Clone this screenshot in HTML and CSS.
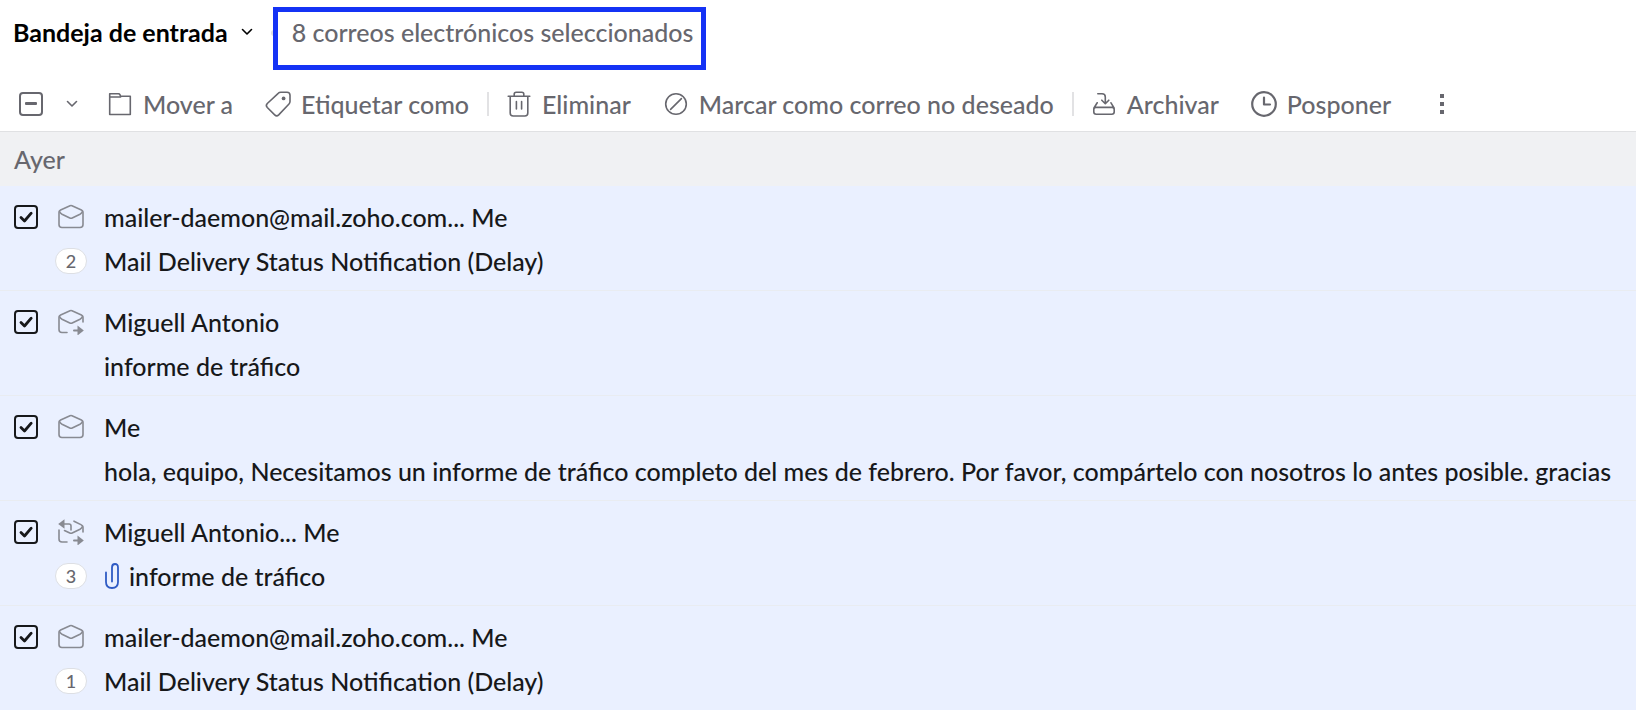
FILE: index.html
```html
<!DOCTYPE html>
<html lang="es">
<head>
    <meta charset="UTF-8">
    <meta name="viewport" content="width=device-width, initial-scale=1.0">
    <title>Bandeja de entrada</title>
    <link rel="stylesheet" href="styles.css">
</head>
<body>
    <svg class="sprite" aria-hidden="true">
        <symbol id="mail-open" viewBox="0 0 26 26">
            <path d="M1 8.2Q1 6.6 2.6 5.9L12 1.7Q13 1.3 14 1.7L23.4 5.9Q25 6.6 25 8.2V20.5Q25 23.5 22 23.5H4Q1 23.5 1 20.5Z"/>
            <path d="M1.5 7.5Q2.2 9.2 4 10.2L11.8 14Q13 14.6 14.2 14L22 10.2Q23.8 9.2 24.5 7.5"/>
        </symbol>
        <symbol id="mail-forward" viewBox="0 0 26 26">
            <path d="M9 23.5H4Q1 23.5 1 20.5V8.2Q1 6.6 2.6 5.9L12 1.7Q13 1.3 14 1.7L23.4 5.9Q25 6.6 25 8.2V13"/>
            <path d="M1.5 7.5Q2.2 9.2 4 10.2L11.8 14Q13 14.6 14.2 14L22 10.2Q23.8 9.2 24.5 7.5"/>
            <path d="M16 21.5H20" stroke-width="2"/>
            <path class="solid" d="M19.5 16.5L25.8 21.5L19.5 26.5Z"/>
        </symbol>
        <symbol id="mail-replied" viewBox="0 0 26 26">
            <path d="M16 2.2L23.4 5.9Q25 6.6 25 8.2V13M9 23H4Q1 23 1 20V11"/>
            <path d="M5 5H11Q13 5 13 7V11"/>
            <path d="M6.5 11.5L11.8 14Q13 14.6 14.2 14L22 10.2Q23.8 9.2 24.5 7.5"/>
            <path class="solid" d="M6.5 0.2L0.2 5L6.5 9.8Z"/>
            <path d="M16 21.5H20" stroke-width="2"/>
            <path class="solid" d="M19.5 16.5L25.8 21.5L19.5 26.5Z"/>
        </symbol>
    </svg>

    <header class="header">
        <button class="folder" type="button">
            Bandeja de entrada
            <svg class="chevron" viewBox="0 0 12 8"><path d="M1.5 1.5L6 6L10.5 1.5"/></svg>
        </button>
        <span class="dot"></span>
        <span class="selected">8 correos electrónicos seleccionados</span>
    </header>

    <div class="toolbar">
        <input class="check check-some" type="checkbox" aria-label="Seleccionar todo">
        <button class="select-menu" type="button" aria-label="Opciones de selección">
            <svg class="chevron" viewBox="0 0 12 8"><path d="M1.5 1.5L6 6L10.5 1.5"/></svg>
        </button>
        <button class="tool" type="button">
            <svg class="icon" viewBox="0 0 26 26"><path d="M2.7 23.5V2.7H11.5Q12.5 2.7 12.9 3.6L13.6 5.2H23.3V23.5ZM2.7 6H13.6"/></svg>
            Mover a
        </button>
        <button class="tool" type="button">
            <svg class="icon" viewBox="0 0 26 26">
                <path d="M13.2 2.3Q14.2 1.2 15.8 1.2H22Q25 1.2 25 4.2V10.6Q25 12 24 13L13.7 23.9Q11.7 25.9 9.7 23.9L2.3 16.5Q0.4 14.5 2.3 12.5Z"/>
                <circle class="solid" cx="18.6" cy="7.4" r="1.9"/>
            </svg>
            Etiquetar como
        </button>
        <span class="separator"></span>
        <button class="tool" type="button">
            <svg class="icon" viewBox="0 0 26 26"><path d="M2.2 5.2H23.8M8.2 5V3.2Q8.2 1.2 10.2 1.2H15.8Q17.8 1.2 17.8 3.2V5M4.2 5.2V22Q4.2 25 7.2 25H18.8Q21.8 25 21.8 22V5.2M10.4 10.5V18M15.6 10.5V18"/></svg>
            Eliminar
        </button>
        <button class="tool" type="button">
            <svg class="icon" viewBox="0 0 26 26"><circle cx="13" cy="13" r="10.3"/><path d="M7.6 18.4L18.4 7.6"/></svg>
            Marcar como correo no deseado
        </button>
        <span class="separator"></span>
        <button class="tool" type="button">
            <svg class="icon" viewBox="0 0 26 26"><path d="M6.8 2.8H11Q14.3 2.8 14.3 6V12M10.8 9.2L14.3 12.7L17.8 9.2M6.2 11.8L2.8 17.2M20 11.8L23.2 17.2M5.2 16.4H20.8Q23.2 16.4 23.2 18.6V21Q23.2 23.2 20.8 23.2H5.2Q2.8 23.2 2.8 21V18.6Q2.8 16.4 5.2 16.4"/></svg>
            Archivar
        </button>
        <button class="tool" type="button">
            <svg class="icon icon-bold" viewBox="0 0 26 26"><circle cx="13" cy="13" r="11.8"/><path d="M13 6.5V13.5H19"/></svg>
            Posponer
        </button>
        <button class="more" type="button" aria-label="Más acciones">
            <svg viewBox="0 0 4 20"><path d="M0 0H4V4H0ZM0 8H4V12H0ZM0 16H4V20H0Z"/></svg>
        </button>
    </div>

    <main>
        <h2 class="day">Ayer</h2>
        <ul class="mail-list">
            <li class="mail">
                <input class="check" type="checkbox" id="mail-1" checked>
                <svg class="icon status"><use href="#mail-open"/></svg>
                <label class="sender" for="mail-1">mailer-daemon@mail.zoho.com... Me</label>
                <span class="count">2</span>
                <p class="subject">Mail Delivery Status Notification (Delay)</p>
            </li>
            <li class="mail">
                <input class="check" type="checkbox" id="mail-2" checked>
                <svg class="icon status"><use href="#mail-forward"/></svg>
                <label class="sender" for="mail-2">Miguell Antonio</label>
                <p class="subject">informe de tráfico</p>
            </li>
            <li class="mail">
                <input class="check" type="checkbox" id="mail-3" checked>
                <svg class="icon status"><use href="#mail-open"/></svg>
                <label class="sender" for="mail-3">Me</label>
                <p class="subject">hola, equipo, Necesitamos un informe de tráfico completo del mes de febrero. Por favor, compártelo con nosotros lo antes posible. gracias</p>
            </li>
            <li class="mail">
                <input class="check" type="checkbox" id="mail-4" checked>
                <svg class="icon status"><use href="#mail-replied"/></svg>
                <label class="sender" for="mail-4">Miguell Antonio... Me</label>
                <span class="count">3</span>
                <p class="subject">
                    <svg class="clip" viewBox="-1 0 16 26"><path d="M1 9.5V19Q1 25 7 25Q13 25 13 19V4.5Q13 1 10 1Q7 1 7 4.5V18.5"/></svg>
                    informe de tráfico
                </p>
            </li>
            <li class="mail">
                <input class="check" type="checkbox" id="mail-5" checked>
                <svg class="icon status"><use href="#mail-open"/></svg>
                <label class="sender" for="mail-5">mailer-daemon@mail.zoho.com... Me</label>
                <span class="count">1</span>
                <p class="subject">Mail Delivery Status Notification (Delay)</p>
            </li>
        </ul>
    </main>
</body>
</html>
```
FILE: styles.css
```css
* {
    box-sizing: border-box;
}
body {
    margin: 0;
    font-family: Lato, "Liberation Sans", sans-serif;
    font-size: 25px;
    font-weight: 500;
    line-height: 32px;
    color: #17181a;
    background-color: #fff;
}
button {
    padding: 0;
    border: none;
    background: none;
    font: inherit;
    color: inherit;
    white-space: nowrap;
    cursor: pointer;
}
svg {
    flex: none;
    fill: none;
    stroke: currentColor;
    stroke-linecap: round;
    stroke-linejoin: round;
}
.sprite {
    display: none;
}
.icon {
    width: 26px;
    height: 26px;
    stroke-width: 1.6;
    overflow: visible;
}
.icon-bold {
    stroke-width: 2.2;
}
.solid {
    fill: currentColor;
    stroke: none;
}
.chevron {
    width: 12px;
    height: 8px;
    stroke-width: 1.6;
}

/* header */
.header {
    display: flex;
    align-items: flex-start;
    padding: 7px 13px 0;
}
.folder {
    display: flex;
    align-items: center;
    gap: 13px;
    padding-top: 9px;
    font-weight: bold;
    color: #000;
}
.dot {
    width: 6px;
    height: 6px;
    margin: 23px -4px 0 18px;
    border-radius: 50%;
    background-color: #e0e0e2;
}
.selected {
    padding: 4px 8px 17px 14px;
    border: 5px solid #1432f5;
    color: #67676e;
    white-space: nowrap;
    z-index: 1;
}

/* toolbar */
.toolbar {
    display: flex;
    align-items: center;
    height: 62px;
    padding: 6px 0 0 19px;
    border-bottom: 1px solid #e0e1e3;
    color: #67676e;
}
.select-menu {
    display: flex;
    padding: 8px 13px 8px 23px;
}
.tool {
    display: flex;
    align-items: center;
    gap: 10px;
    padding: 0 16px;
}
.separator {
    width: 2px;
    height: 24px;
    margin: 0 1px 0 2px;
    background-color: #e2e2e4;
}
.more {
    display: flex;
    padding: 0 33px;
}
.more svg {
    width: 4px;
    height: 20px;
    fill: currentColor;
    stroke: none;
}

.check {
    appearance: none;
    display: grid;
    place-items: center;
    width: 24px;
    height: 24px;
    margin: 0;
    border: 2px solid #17181a;
    border-radius: 4px;
}
.check:checked {
    background: url("data:image/svg+xml,%3Csvg xmlns='http://www.w3.org/2000/svg' viewBox='0 0 20 20'%3E%3Cpath d='M5 10.5L8.5 14L15.2 6.2' fill='none' stroke='%2317181a' stroke-width='2.8' stroke-linecap='round' stroke-linejoin='round'/%3E%3C/svg%3E") center / 20px 20px no-repeat;
}
.check-some {
    border-color: #67676e;
}
.check-some::before {
    content: "";
    width: 12px;
    height: 3px;
    border-radius: 1px;
    background-color: #67676e;
}

/* mail list */
.day {
    margin: 0;
    padding: 11px 14px;
    font-size: 25px;
    font-weight: inherit;
    color: #67676e;
    background-color: #f0f1f3;
}
.mail-list {
    margin: 0;
    padding: 0;
    list-style: none;
}
.mail {
    display: grid;
    grid-template-columns: 24px 32px 1fr;
    grid-template-rows: 44px 44px;
    column-gap: 17px;
    align-items: center;
    height: 105px;
    padding: 9px 14px 7px;
    border-bottom: 1px solid #e9ecf1;
    background-color: #eaf0ff;
}
.status {
    justify-self: center;
    color: #888a92;
}
.count {
    grid-column: 2;
    height: 26px;
    border: 1px solid #dddfe4;
    border-radius: 13px;
    font-size: 18px;
    line-height: 24px;
    text-align: center;
    color: #67676e;
    background-color: #fff;
}
.subject {
    grid-column: 3;
    display: flex;
    align-items: center;
    gap: 9px;
    margin: 0;
    white-space: nowrap;
}
.clip {
    width: 16px;
    height: 26px;
    stroke-width: 1.8;
    color: #2f5bc4;
}
```
